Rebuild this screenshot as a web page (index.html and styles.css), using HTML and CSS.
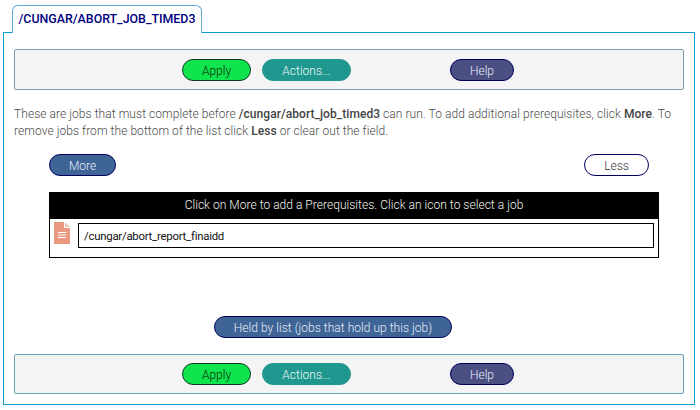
FILE: index.html
```html
<!DOCTYPE html>
<html lang="en">
<head>
<meta charset="utf-8">
<title>Prerequisites</title>
<link rel="stylesheet" href="styles.css">
</head>
<body>
<div class="tabs"><div class="tab">/CUNGAR/ABORT_JOB_TIMED3</div></div>
<main class="panel">
  <div class="toolbar">
    <button class="btn apply">Apply</button>
    <button class="btn actions">Actions...</button>
    <button class="btn help">Help</button>
  </div>
  <p class="intro">These are jobs that must complete before <b>/cungar/abort_job_timed3</b> can run. To add additional prerequisites, click <b>More</b>. To remove jobs from the bottom of the list click <b>Less</b> or clear out the field.</p>
  <div class="morebar">
    <button class="btn more">More</button>
    <button class="btn less">Less</button>
  </div>
  <section class="list">
    <div class="list-head">Click on More to add a Prerequisites. Click an icon to select a job</div>
    <div class="list-row">
      <svg class="file" width="16" height="22" viewBox="0 0 16 22" aria-hidden="true">
        <path d="M0 0H10V6H16V22H0Z" fill="#ea9a7f"/>
        <path d="M11 0L16 5H11Z" fill="#f3c3b2"/>
        <path d="M4 10.5H12M4 13H12M4 15.5H12" stroke="#fff" stroke-width="1.2"/>
      </svg>
      <div class="field">/cungar/abort_report_finaidd</div>
    </div>
  </section>
  <div class="heldbar"><button class="btn held">Held by list (jobs that hold up this job)</button></div>
  <div class="toolbar bottom">
    <button class="btn apply">Apply</button>
    <button class="btn actions">Actions...</button>
    <button class="btn help">Help</button>
  </div>
</main>
</body>
</html>
```
FILE: styles.css
```css
* { box-sizing: border-box; }
html, body { margin: 0; padding: 0; }
body {
  width: 700px;
  height: 410px;
  background: #fff;
  font-family: Roboto, "Liberation Sans", sans-serif;
  font-size: 12px;
  font-weight: 300;
  color: #555;
  overflow: hidden;
}
.tabs { padding: 5px 0 0 12px; height: 33px; position: relative; z-index: 1; }
.tab {
  width: 190px;
  height: 28px;
  border: 1px solid #5fa8dc;
  border-bottom: 0;
  border-radius: 6px 6px 0 0;
  background: #fff;
  color: #000080;
  font-weight: 500;
  font-size: 12.4px;
  line-height: 25px;
  text-align: center;
}
.panel {
  width: 692px;
  height: 373px;
  margin: -1px 0 0 3px;
  border: 1px solid #0a9ccc;
  padding: 16px 10px 0;
}
.toolbar {
  width: 670px;
  height: 41px;
  background: #f4f4f4;
  border: 1px solid #7f9cac;
  border-radius: 2px;
  display: flex;
  align-items: center;
  padding-left: 167px;
}
.toolbar.bottom { height: 40px; border-color: #6a9fbc; }
.btn {
  height: 22px;
  border: 1px solid #000060;
  border-radius: 11px;
  padding: 2px 0 0;
  font-family: inherit;
  font-size: 12px;
  font-weight: 300;
  line-height: 18px;
  text-align: center;
  color: #e6eef8;
}
.apply { width: 69px; background: #10e44c; color: #052b10; border-color: #0b3a20; }
.actions { width: 89px; margin-left: 11px; background: #209890; border-color: #209890; color: #eef8f6; }
.help { width: 64px; margin-left: 99px; background: #4b4f82; }
.intro { margin: 16px 0 0; width: 670px; line-height: 17px; color: #4a4a4a; letter-spacing: 0.06px; }
.intro b { font-weight: 500; color: #444; }
.morebar {
  display: flex;
  justify-content: space-between;
  margin: 14px 0 0 35px;
  width: 600px;
}
.more { width: 67px; background: #3f6496; }
.less { width: 65px; background: #fff; color: #333; }
.list {
  width: 610px;
  height: 66px;
  margin: 16px 0 0 35px;
  border: 1px solid #000;
  border-top: 0;
}
.list-head {
  height: 27px;
  margin: 0 -1px;
  background: #000;
  color: #f4f6ee;
  line-height: 27px;
  letter-spacing: 0.03px;
  text-align: center;
}
.list-row { display: flex; align-items: flex-start; padding: 3px 4px 0; }
.file { flex: none; }
.field {
  width: 576px;
  height: 25px;
  margin: 1px 0 0 8px;
  border: 1px solid #000;
  padding: 1px 0 0 5px;
  font-size: 11.4px;
  font-weight: 400;
  letter-spacing: -0.25px;
  line-height: 22px;
  color: #111;
}
.heldbar { margin: 58px 0 0 200px; }
.held { width: 238px; background: #3f6496; letter-spacing: 0.03px; }
.bottom { margin-top: 16px; }
```
